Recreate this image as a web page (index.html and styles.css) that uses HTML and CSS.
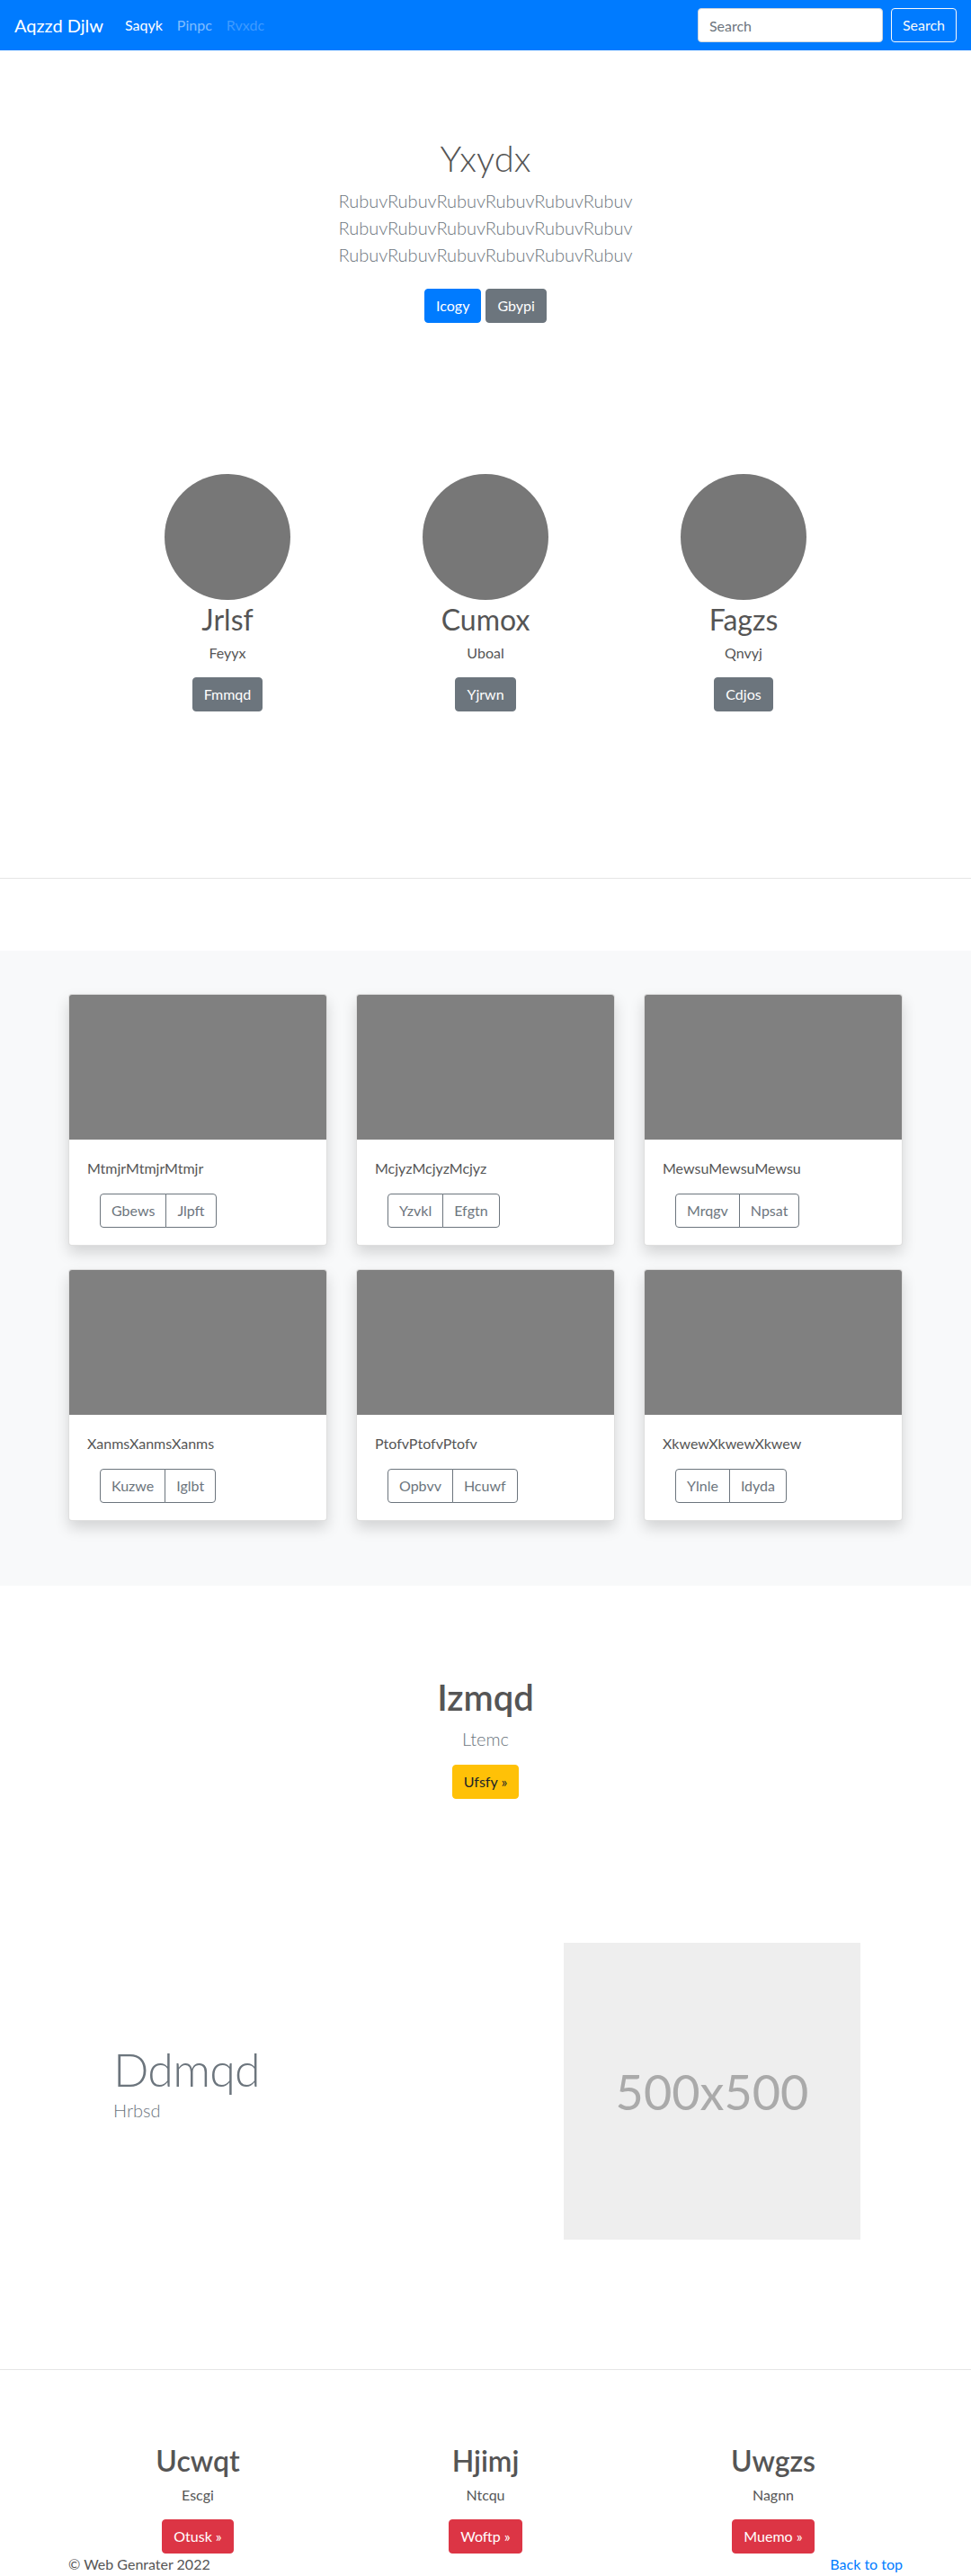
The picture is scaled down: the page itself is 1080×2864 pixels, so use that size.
FILE: index.html
```html
<!DOCTYPE html>
<html lang="en">
<head>
<meta charset="utf-8">
<title>Aqzzd Djlw</title>
<link rel="stylesheet" href="styles.css">
</head>
<body>
<nav class="navbar">
  <a class="brand" href="#">Aqzzd Djlw</a>
  <ul class="nav-links">
    <li><a class="nav-link active" href="#">Saqyk</a></li>
    <li><a class="nav-link" href="#">Pinpc</a></li>
    <li><a class="nav-link disabled" href="#">Rvxdc</a></li>
  </ul>
  <form class="search">
    <input class="search-input" type="text" placeholder="Search">
    <button class="btn btn-outline-light" type="button">Search</button>
  </form>
</nav>

<section class="hero">
  <h1 class="hero-title">Yxydx</h1>
  <p class="lead">RubuvRubuvRubuvRubuvRubuvRubuv<br>RubuvRubuvRubuvRubuvRubuvRubuv<br>RubuvRubuvRubuvRubuvRubuvRubuv</p>
  <div class="hero-actions">
    <a class="btn btn-primary" href="#">Icogy</a>
    <a class="btn btn-secondary" href="#">Gbypi</a>
  </div>
</section>

<section class="team">
  <div class="member">
    <div class="avatar"></div>
    <h2 class="member-name">Jrlsf</h2>
    <p class="member-role">Feyyx</p>
    <a class="btn btn-secondary" href="#">Fmmqd</a>
  </div>
  <div class="member">
    <div class="avatar"></div>
    <h2 class="member-name">Cumox</h2>
    <p class="member-role">Uboal</p>
    <a class="btn btn-secondary" href="#">Yjrwn</a>
  </div>
  <div class="member">
    <div class="avatar"></div>
    <h2 class="member-name">Fagzs</h2>
    <p class="member-role">Qnvyj</p>
    <a class="btn btn-secondary" href="#">Cdjos</a>
  </div>
</section>

<hr class="divider divider-team">

<section class="album">
  <div class="card-grid">
    <div class="card">
      <div class="card-img"></div>
      <div class="card-body">
        <p class="card-text">MtmjrMtmjrMtmjr</p>
        <div class="btn-group"><a class="btn btn-outline-secondary" href="#">Gbews</a><a class="btn btn-outline-secondary" href="#">Jlpft</a></div>
      </div>
    </div>
    <div class="card">
      <div class="card-img"></div>
      <div class="card-body">
        <p class="card-text">McjyzMcjyzMcjyz</p>
        <div class="btn-group"><a class="btn btn-outline-secondary" href="#">Yzvkl</a><a class="btn btn-outline-secondary" href="#">Efgtn</a></div>
      </div>
    </div>
    <div class="card">
      <div class="card-img"></div>
      <div class="card-body">
        <p class="card-text">MewsuMewsuMewsu</p>
        <div class="btn-group"><a class="btn btn-outline-secondary" href="#">Mrqgv</a><a class="btn btn-outline-secondary" href="#">Npsat</a></div>
      </div>
    </div>
    <div class="card">
      <div class="card-img"></div>
      <div class="card-body">
        <p class="card-text">XanmsXanmsXanms</p>
        <div class="btn-group"><a class="btn btn-outline-secondary" href="#">Kuzwe</a><a class="btn btn-outline-secondary" href="#">Iglbt</a></div>
      </div>
    </div>
    <div class="card">
      <div class="card-img"></div>
      <div class="card-body">
        <p class="card-text">PtofvPtofvPtofv</p>
        <div class="btn-group"><a class="btn btn-outline-secondary" href="#">Opbvv</a><a class="btn btn-outline-secondary" href="#">Hcuwf</a></div>
      </div>
    </div>
    <div class="card">
      <div class="card-img"></div>
      <div class="card-body">
        <p class="card-text">XkwewXkwewXkwew</p>
        <div class="btn-group"><a class="btn btn-outline-secondary" href="#">Ylnle</a><a class="btn btn-outline-secondary" href="#">Idyda</a></div>
      </div>
    </div>
  </div>
</section>

<section class="cta">
  <h2 class="cta-title">Izmqd</h2>
  <p class="lead cta-lead">Ltemc</p>
  <a class="btn btn-warning" href="#">Ufsfy &raquo;</a>
</section>

<section class="featurette">
  <div class="featurette-text">
    <h2 class="featurette-heading">Ddmqd</h2>
    <p class="featurette-lead">Hrbsd</p>
  </div>
  <div class="placeholder"><span class="placeholder-text">500x500</span></div>
</section>

<hr class="divider divider-feature">

<section class="columns">
  <div class="column">
    <h2 class="column-title">Ucwqt</h2>
    <p class="column-text">Escgi</p>
    <a class="btn btn-danger" href="#">Otusk &raquo;</a>
  </div>
  <div class="column">
    <h2 class="column-title">Hjimj</h2>
    <p class="column-text">Ntcqu</p>
    <a class="btn btn-danger" href="#">Woftp &raquo;</a>
  </div>
  <div class="column">
    <h2 class="column-title">Uwgzs</h2>
    <p class="column-text">Nagnn</p>
    <a class="btn btn-danger" href="#">Muemo &raquo;</a>
  </div>
</section>

<footer class="footer">
  <p class="footer-copy">&copy; Web Genrater 2022</p>
  <a class="footer-top" href="#">Back to top</a>
</footer>
</body>
</html>
```

FILE: styles.css
```css
* { box-sizing: border-box; }

body {
  margin: 0;
  font-family: Lato, "Open Sans", "Noto Sans", sans-serif;
  font-size: 16px;
  line-height: 1.5;
  color: #555;
  background: #fff;
}

a { text-decoration: none; }

/* Navbar */
.navbar {
  display: flex;
  align-items: center;
  height: 56px;
  padding: 0 16px;
  background: #007bff;
}
.brand {
  font-size: 20px;
  line-height: 30px;
  color: #fff;
  margin-right: 16px;
}
.nav-links {
  display: flex;
  list-style: none;
  margin: 0;
  padding: 0;
}
.nav-link {
  display: block;
  padding: 8px;
  color: rgba(255,255,255,.5);
}
.nav-link.active { color: #fff; }
.nav-link.disabled { color: rgba(255,255,255,.25); }
.search {
  margin: 0 0 0 auto;
  display: flex;
  align-items: center;
}
.search-input {
  width: 206px;
  height: 38px;
  padding: 6px 12px;
  margin-right: 9px;
  border: 1px solid #ced4da;
  border-radius: 4px;
  font: inherit;
  color: #495057;
}
.search-input::placeholder { color: #6c757d; }

/* Buttons */
.btn {
  display: inline-block;
  padding: 6px 12px;
  font-family: inherit;
  font-size: 16px;
  line-height: 24px;
  border: 1px solid transparent;
  border-radius: 4px;
  background: transparent;
  cursor: pointer;
  text-align: center;
}
.btn-primary { background: #007bff; border-color: #007bff; color: #fff; }
.btn-secondary { background: #6c757d; border-color: #6c757d; color: #fff; }
.btn-warning { background: #ffc107; border-color: #ffc107; color: #212529; }
.btn-danger { background: #dc3545; border-color: #dc3545; color: #fff; }
.btn-outline-light { border-color: #f8f9fa; color: #f8f9fa; }
.btn-outline-secondary { border-color: #6c757d; color: #6c757d; background: #fff; }

/* Hero */
.hero {
  text-align: center;
  padding-top: 96px;
}
.hero-title {
  margin: 0 0 8px;
  font-size: 40px;
  line-height: 48px;
  font-weight: 300;
  color: #555;
}
.lead {
  font-size: 20px;
  line-height: 30px;
  font-weight: 300;
  color: #6c757d;
  margin: 0 0 23px;
}
.hero-actions {
  display: flex;
  justify-content: center;
  gap: 5px;
}

/* Team */
.team {
  margin-top: 168px;
  display: grid;
  grid-template-columns: repeat(3, 287px);
  justify-content: center;
  text-align: center;
}
.avatar {
  width: 140px;
  height: 140px;
  border-radius: 50%;
  background: #777;
  margin: 0 auto;
}
.member-name {
  margin: 3px 0 6px;
  font-size: 32px;
  line-height: 38px;
  font-weight: 400;
}
.member-role { margin: 0 0 15px; }

/* Dividers */
.divider {
  margin: 0;
  border: 0;
  border-top: 1px solid rgba(0,0,0,.1);
}
.divider-team { margin-top: 185px; }
.divider-feature { margin-top: 144px; }

/* Album */
.album {
  margin-top: 80px;
  padding: 48px 0 72px;
  background: #f8f9fa;
}
.card-grid {
  width: 960px;
  margin: 0 auto;
  padding: 0 16px;
  display: grid;
  grid-template-columns: repeat(3, 1fr);
  column-gap: 32px;
  row-gap: 26px;
}
.card {
  background: #fff;
  border: 1px solid rgba(0,0,0,.125);
  border-radius: 4px;
  box-shadow: 0 8px 16px rgba(0,0,0,.15);
  overflow: hidden;
}
.card-img {
  height: 161px;
  background: #808080;
}
.card-body { padding: 20px 20px 19px; }
.card-text { margin: 0 0 16px; }
.btn-group {
  display: inline-flex;
  margin-left: 14px;
}
.btn-group .btn:first-child { border-radius: 4px 0 0 4px; }
.btn-group .btn + .btn { margin-left: -1px; border-radius: 0 4px 4px 0; }

/* CTA */
.cta {
  text-align: center;
  padding-top: 100px;
}
.cta-title {
  margin: 0 0 7px;
  font-size: 40px;
  line-height: 48px;
  font-weight: 600;
}
.cta-lead { margin: 0 0 14px; }

/* Featurette */
.featurette {
  width: 960px;
  margin: 160px auto 0;
  padding-left: 66px;
  display: grid;
  grid-template-columns: 501px 330px;
  align-items: center;
}
.featurette-text { padding-bottom: 14px; }
.featurette-heading {
  margin: 0 0 6px;
  font-size: 52px;
  line-height: 50px;
  font-weight: 300;
  letter-spacing: -0.8px;
  color: #6c757d;
}
.featurette-lead {
  margin: 0;
  font-size: 20px;
  line-height: 30px;
  font-weight: 300;
  color: #6c757d;
}
.placeholder {
  width: 330px;
  height: 330px;
  background: #eee;
  display: flex;
  align-items: center;
  justify-content: center;
}
.placeholder-text {
  font-size: 54px;
  color: #aaa;
}

/* Columns */
.columns {
  width: 960px;
  margin: 0 auto;
  padding-top: 82px;
  display: grid;
  grid-template-columns: repeat(3, 1fr);
  text-align: center;
}
.column-title {
  margin: 0 0 7px;
  font-size: 32px;
  line-height: 38px;
  font-weight: 600;
}
.column-text { margin: 0 0 15px; }

/* Footer */
.footer {
  width: 960px;
  margin: 0 auto;
  padding: 0 16px;
  display: flex;
  justify-content: space-between;
}
.footer-copy { margin: 0; }
.footer-top { color: #007bff; }
```
